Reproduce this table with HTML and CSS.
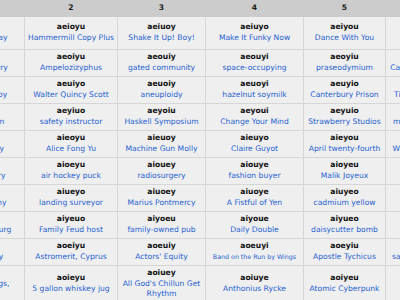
FILE: index.html
```html
<!DOCTYPE html>
<html>
<head>
<meta charset="utf-8">
<link rel="stylesheet" href="styles.css">
</head>
<body>
<div class="viewport">
<table class="grid">
<colgroup>
<col class="c1"><col class="c2"><col class="c3"><col class="c4"><col class="c5"><col class="c6">
</colgroup>
<thead>
<tr><th>1</th><th>2</th><th>3</th><th>4</th><th>5</th><th>6</th></tr>
</thead>
<tbody>
<tr class="first">
<td><b>aeiouy</b><a>the Tuesday holiday</a></td>
<td><b>aeioyu</b><a>Hammermill Copy Plus</a></td>
<td><b>aeiuoy</b><a>Shake It Up! Boy!</a></td>
<td><b>aeiuyo</b><a>Make It Funky Now</a></td>
<td><b>aeiyou</b><a>Dance With You</a></td>
<td><b>aeiyuo</b><a>Zoot Suit</a></td>
</tr>
<tr>
<td><b>aeoiuy</b><a>computer chemistry</a></td>
<td><b>aeoiyu</b><a>Ampelozizyphus</a></td>
<td><b>aeouiy</b><a>gated community</a></td>
<td><b>aeouyi</b><a>space-occupying</a></td>
<td><b>aeoyiu</b><a>praseodymium</a></td>
<td><b>aeoyui</b><a>Catherine the Great</a></td>
</tr>
<tr>
<td><b>aeuioy</b><a>Rhinestone Cowboy</a></td>
<td><b>aeuiyo</b><a>Walter Quincy Scott</a></td>
<td><b>aeuoiy</b><a>aneuploidy</a></td>
<td><b>aeuoyi</b><a>hazelnut soymilk</a></td>
<td><b>aeuyio</b><a>Canterbury Prison</a></td>
<td><b>aeuyoi</b><a>Tipsy Turvy Towns</a></td>
</tr>
<tr>
<td><b>aeyiou</b><a>Robin Hood's Barn</a></td>
<td><b>aeyiuo</b><a>safety instructor</a></td>
<td><b>aeyoiu</b><a>Haskell Symposium</a></td>
<td><b>aeyoui</b><a>Change Your Mind</a></td>
<td><b>aeyuio</b><a>Strawberry Studios</a></td>
<td><b>aeyuoi</b><a>mountain laureate</a></td>
</tr>
<tr>
<td><b>aieouy</b><a>spoke courteously</a></td>
<td><b>aieoyu</b><a>Alice Fong Yu</a></td>
<td><b>aieuoy</b><a>Machine Gun Molly</a></td>
<td><b>aieuyo</b><a>Claire Guyot</a></td>
<td><b>aieyou</b><a>April twenty-fourth</a></td>
<td><b>aieyuo</b><a>Wild Honeysuckles</a></td>
</tr>
<tr>
<td><b>aioeuy</b><a>the planet Mercury</a></td>
<td><b>aioeyu</b><a>air hockey puck</a></td>
<td><b>aiouey</b><a>radiosurgery</a></td>
<td><b>aiouye</b><a>fashion buyer</a></td>
<td><b>aioyeu</b><a>Malik Joyeux</a></td>
<td><b>aioyue</b><a>Eye Spy</a></td>
</tr>
<tr>
<td><b>aiueoy</b><a>United States Army</a></td>
<td><b>aiueyo</b><a>landing surveyor</a></td>
<td><b>aiuoey</b><a>Marius Pontmercy</a></td>
<td><b>aiuoye</b><a>A Fistful of Yen</a></td>
<td><b>aiuyeo</b><a>cadmium yellow</a></td>
<td><b>aiuyoe</b><a>Oh Boy</a></td>
</tr>
<tr>
<td><b>aiyeou</b><a>Duchy of Luxembourg</a></td>
<td><b>aiyeuo</b><a>Family Feud host</a></td>
<td><b>aiyoeu</b><a>family-owned pub</a></td>
<td><b>aiyoue</b><a>Daily Double</a></td>
<td><b>aiyueo</b><a>daisycutter bomb</a></td>
<td><b>aiyuoe</b><a>Yoyo</a></td>
</tr>
<tr>
<td><b>aoeiuy</b><a>twentieth century</a></td>
<td><b>aoeiyu</b><a>Astromerit, Cyprus</a></td>
<td><b>aoeuiy</b><a>Actors' Equity</a></td>
<td><b>aoeuyi</b><a class="small">Band on the Run by Wings</a></td>
<td><b>aoeyiu</b><a>Apostle Tychicus</a></td>
<td><b>aoeyui</b><a>saltwater crocodile</a></td>
</tr>
<tr>
<td><b>aoieuy</b><a>Cabbages and Kings, Limited</a></td>
<td><b>aoieyu</b><a>5 gallon whiskey jug</a></td>
<td><b>aoiuey</b><a>All God's Chillun Get Rhythm</a></td>
<td><b>aoiuye</b><a>Anthonius Rycke</a></td>
<td><b>aoiyeu</b><a>Atomic Cyberpunk</a></td>
<td><b>aoiyue</b><a>Bouquet</a></td>
</tr>
<tr>
<td><b>aoueiy</b><a>Outer Space</a></td>
<td><b>aoueyi</b><a>Blue Jay Way</a></td>
<td><b>aouiey</b><a>Equity</a></td>
<td><b>aouiye</b><a>Big Sur</a></td>
<td><b>aouyei</b><a>Tokyo</a></td>
<td><b>aouyie</b><a>Quay</a></td>
</tr>
</tbody>
</table>
</div>
</body>
</html>
```
FILE: styles.css
```css
html, body {
  margin: 0;
  padding: 0;
  background: #ffffff;
  overflow: hidden;
}
.viewport {
  width: 400px;
  height: 300px;
  overflow: hidden;
}
.grid {
  margin-left: -86px;
  border-collapse: collapse;
  table-layout: fixed;
  width: 556px;
  font-family: "DejaVu Sans", Verdana, sans-serif;
  font-size: 7.6px;
  line-height: 10.5px;
}
.c1 { width: 110px; }
.c2 { width: 93px; }
.c3 { width: 88px; }
.c4 { width: 98px; }
.c5 { width: 82px; }
.c6 { width: 85px; }
.grid th {
  background: #cccccc;
  color: #1a1a1a;
  font-weight: bold;
  padding: 2.5px 2px;
  border: 1px solid #cccccc;
  border-top: none;
}
.grid td {
  background: #efefef;
  border: 1px solid #d6d6d6;
  padding: 2.5px 2px;
  text-align: center;
  vertical-align: middle;
}
.grid tr.first td {
  height: 27px;
}
.grid td b {
  display: block;
  color: #111111;
  font-weight: bold;
}
.grid td a {
  display: block;
  color: #1f5fd0;
}
.grid td a.small {
  font-size: 6.3px;
}
```
